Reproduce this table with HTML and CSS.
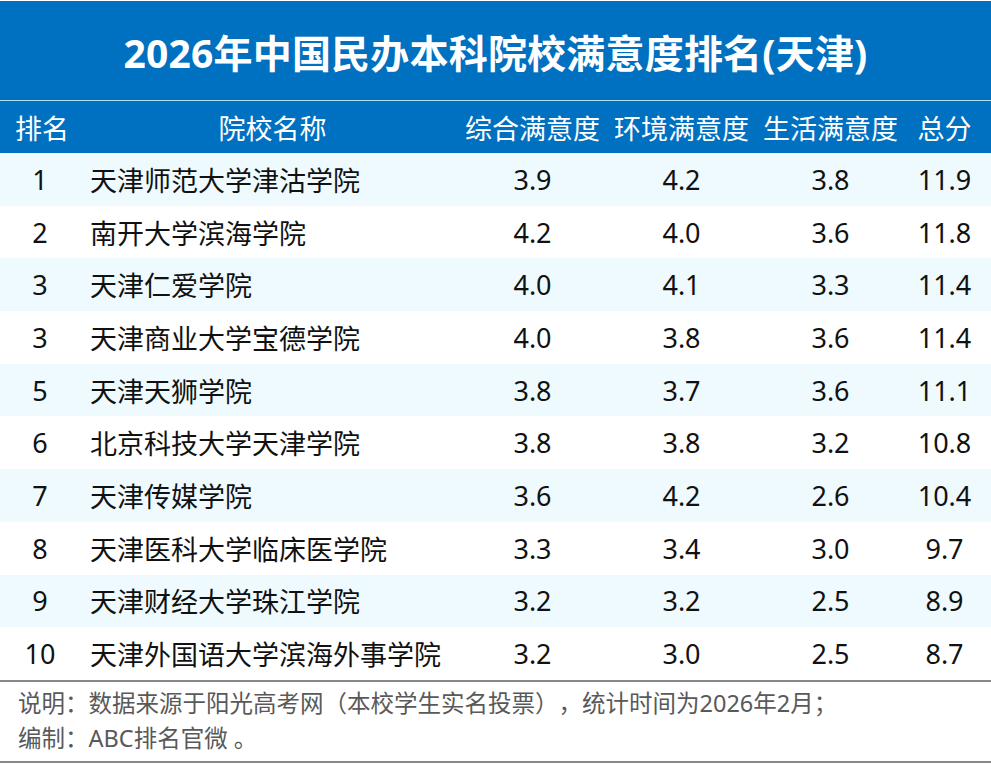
FILE: index.html
```html
<!DOCTYPE html>
<html lang="zh-CN">
<head>
<meta charset="utf-8">
<title>2026年中国民办本科院校满意度排名(天津)</title>
<link rel="stylesheet" href="styles.css">
</head>
<body>
<div class="page">
  <div class="title">2026年中国民办本科院校满意度排名(天津)</div>
  <div class="row head">
    <div class="c rank hrank">排名</div>
    <div class="c center">院校名称</div>
    <div class="c center">综合满意度</div>
    <div class="c center">环境满意度</div>
    <div class="c center">生活满意度</div>
    <div class="c center">总分</div>
  </div>
  <div class="row odd"><div class="c rank">1</div><div class="c name">天津师范大学津沽学院</div><div class="c center">3.9</div><div class="c center">4.2</div><div class="c center">3.8</div><div class="c center">11.9</div></div>
  <div class="row"><div class="c rank">2</div><div class="c name">南开大学滨海学院</div><div class="c center">4.2</div><div class="c center">4.0</div><div class="c center">3.6</div><div class="c center">11.8</div></div>
  <div class="row odd"><div class="c rank">3</div><div class="c name">天津仁爱学院</div><div class="c center">4.0</div><div class="c center">4.1</div><div class="c center">3.3</div><div class="c center">11.4</div></div>
  <div class="row"><div class="c rank">3</div><div class="c name">天津商业大学宝德学院</div><div class="c center">4.0</div><div class="c center">3.8</div><div class="c center">3.6</div><div class="c center">11.4</div></div>
  <div class="row odd"><div class="c rank">5</div><div class="c name">天津天狮学院</div><div class="c center">3.8</div><div class="c center">3.7</div><div class="c center">3.6</div><div class="c center">11.1</div></div>
  <div class="row"><div class="c rank">6</div><div class="c name">北京科技大学天津学院</div><div class="c center">3.8</div><div class="c center">3.8</div><div class="c center">3.2</div><div class="c center">10.8</div></div>
  <div class="row odd"><div class="c rank">7</div><div class="c name">天津传媒学院</div><div class="c center">3.6</div><div class="c center">4.2</div><div class="c center">2.6</div><div class="c center">10.4</div></div>
  <div class="row"><div class="c rank">8</div><div class="c name">天津医科大学临床医学院</div><div class="c center">3.3</div><div class="c center">3.4</div><div class="c center">3.0</div><div class="c center">9.7</div></div>
  <div class="row odd"><div class="c rank">9</div><div class="c name">天津财经大学珠江学院</div><div class="c center">3.2</div><div class="c center">3.2</div><div class="c center">2.5</div><div class="c center">8.9</div></div>
  <div class="row"><div class="c rank">10</div><div class="c name">天津外国语大学滨海外事学院</div><div class="c center">3.2</div><div class="c center">3.0</div><div class="c center">2.5</div><div class="c center">8.7</div></div>
  <div class="foot">
    <p>说明：数据来源于阳光高考网（本校学生实名投票），统计时间为2026年2月；</p>
    <p>编制：ABC排名官微 。</p>
  </div>
</div>
</body>
</html>
```
FILE: styles.css
```css
html, body {
  margin: 0;
  padding: 0;
  background: #ffffff;
}
body {
  font-family: "Noto Sans", "Noto Sans CJK SC", sans-serif;
  color: #111111;
  text-spacing-trim: space-all;
}
.page {
  width: 991px;
  padding-top: 1px;
}
.title {
  height: 99px;
  background: #0070c0;
  color: #ffffff;
  font-weight: 700;
  font-size: 39px;
  display: flex;
  align-items: center;
  justify-content: center;
  border-bottom: 1px solid #a8e4f4;
  letter-spacing: 0.2px;
}
.row {
  display: grid;
  grid-template-columns: 80px 385px 135px 163px 135px 1fr;
  height: 52.7px;
  align-items: center;
  font-size: 27px;
}
.row.head {
  height: 52px;
  background: #0070c0;
  color: #ffffff;
}
.row.odd {
  background: #eefafd;
}
.c {
  white-space: nowrap;
}
.rank {
  text-align: center;
}
.hrank {
  padding-left: 4px;
}
.name {
  padding-left: 10px;
}
.center {
  text-align: center;
}
.foot {
  border-top: 2px solid #888888;
  border-bottom: 2px solid #888888;
  height: 79px;
  padding: 0 0 0 18px;
  color: #595959;
  font-size: 23.5px;
  display: flex;
  flex-direction: column;
  justify-content: center;
}
.foot p {
  margin: 0;
  line-height: 35px;
}
```
